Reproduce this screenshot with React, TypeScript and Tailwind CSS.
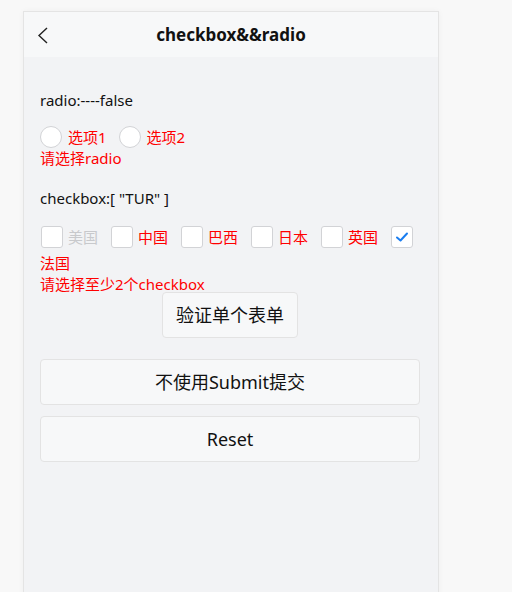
import React from "react";

const font = { fontFamily: '"Noto Sans", "Noto Sans CJK SC", sans-serif' };

function Box({ checked = false }: { checked?: boolean }) {
  return (
    <span className="w-[22px] h-[22px] shrink-0 rounded-[3px] border border-[#d2d3d6] bg-white flex items-center justify-center">
      {checked && (
        <svg width="16" height="16" viewBox="0 0 16 16">
          <path d="M3 8.5 L6.5 11.5 L13 4.5" fill="none" stroke="#1a7df0" strokeWidth="2" strokeLinecap="round" strokeLinejoin="round" />
        </svg>
      )}
    </span>
  );
}

function Radio({ label }: { label: string }) {
  return (
    <span className="flex items-center mr-[12px]">
      <span className="w-[22px] h-[22px] rounded-full border border-[#d2d3d6] bg-white" />
      <span className="ml-[6px] text-[15px] leading-[20px] text-[#ff0000]">{label}</span>
    </span>
  );
}

export default function App() {
  const countries = ["美国", "中国", "巴西", "日本", "英国"];
  return (
    <div className="w-[512px] h-[592px] bg-[#f8f8f8] overflow-hidden" style={font}>
      <div className="ml-[23px] mt-[11px] w-[416px] h-[590px] border border-[#e4e4e4] bg-[#f2f3f5] flex flex-col shadow-[0_0_6px_rgba(0,0,0,0.04)]">
        <div className="relative h-[45px] bg-[#f7f8f9] flex items-center justify-center shrink-0">
          <svg className="absolute left-[13px] top-[15px]" width="12" height="17" viewBox="0 0 12 17">
            <path d="M10 1 L2 8.5 L10 16" fill="none" stroke="#222" strokeWidth="1.4" />
          </svg>
          <span className="text-[17px] font-bold text-[#111] leading-[20px]">checkbox&amp;&amp;radio</span>
        </div>
        <div className="pl-[16px] pr-[18px] pt-[33px] flex flex-col text-[#111]">
          <div className="text-[15px] leading-[20px]">radio:----false</div>
          <div className="flex items-center mt-[16px]">
            <Radio label="选项1" />
            <Radio label="选项2" />
          </div>
          <div className="text-[15px] leading-[20px] text-[#ff0000]">请选择radio</div>
          <div className="text-[15px] leading-[20px] mt-[20px]">checkbox:[ "TUR" ]</div>
          <div className="flex items-center mt-[18px] pl-[1px]">
            {countries.map((c, i) => (
              <span key={c} className="flex items-center w-[70px]">
                <Box />
                <span className={"ml-[5px] text-[15px] leading-[20px] " + (i === 0 ? "text-[#c8c9cc]" : "text-[#ff0000]")}>{c}</span>
              </span>
            ))}
            <Box checked />
          </div>
          <div className="text-[15px] leading-[20px] text-[#ff0000] mt-[5px]">法国</div>
          <div className="text-[15px] leading-[20px] text-[#ff0000] mt-[1px]">请选择至少2个checkbox</div>
          <div className="flex justify-center mt-[-2px]">
            <button className="h-[46px] px-[13px] text-[18px] text-[#111] bg-[#f7f8f9] border border-[#e3e3e3] rounded-[4px]">验证单个表单</button>
          </div>
          <button className="mt-[21px] h-[46px] w-full text-[18px] text-[#111] bg-[#f7f8f9] border border-[#e3e3e3] rounded-[4px]">不使用Submit提交</button>
          <button className="mt-[11px] h-[46px] w-full text-[18px] text-[#111] bg-[#f7f8f9] border border-[#e3e3e3] rounded-[4px]">Reset</button>
        </div>
      </div>
    </div>
  );
}
